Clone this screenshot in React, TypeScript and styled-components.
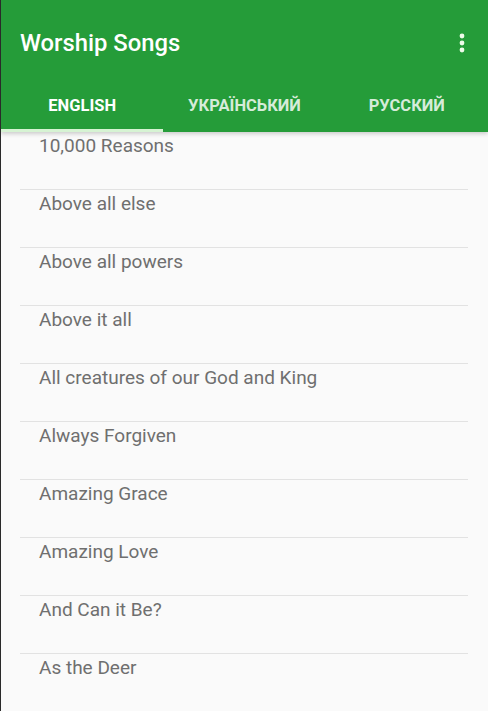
import React from "react";
import styled, { createGlobalStyle } from "styled-components";

const Global = createGlobalStyle`
  html, body { margin: 0; padding: 0; background: #fafafa; }
  body { font-family: Roboto, "Noto Sans", "Liberation Sans", sans-serif; }
  #root { width: 488px; height: 711px; overflow: hidden; }
`;

const Screen = styled.div`
  position: relative;
  width: 488px;
  height: 711px;
  background: #fafafa;
  border-left: 1px solid #2a2a2a;
  box-sizing: border-box;
  overflow: hidden;
  display: flex;
  flex-direction: column;
`;

const StatusPatch = styled.div`
  position: absolute;
  top: 0;
  right: 0;
  width: 44px;
  height: 14px;
  background: #1c6b2b;
`;

const AppBar = styled.header`
  background: #259c39;
  box-shadow: 0 2px 4px rgba(0, 0, 0, 0.18);
  display: flex;
  flex-direction: column;
  z-index: 1;
`;

const Toolbar = styled.div`
  height: 86px;
  display: flex;
  align-items: center;
  justify-content: space-between;
  padding: 0 0 0 19px;
`;

const Title = styled.h1`
  margin: 0;
  font-size: 23.8px;
  font-weight: 500;
  color: #ffffff;
`;

const MenuButton = styled.div`
  width: 52px;
  height: 52px;
  display: flex;
  align-items: center;
  justify-content: center;
`;

const Tabs = styled.nav`
  display: grid;
  grid-template-columns: 1fr 1fr 1fr;
  height: 46px;
`;

const Tab = styled.div<{ $active?: boolean }>`
  position: relative;
  display: flex;
  align-items: center;
  justify-content: center;
  padding-bottom: 8px;
  font-size: 16.5px;
  font-weight: 700;
  color: ${(p) => (p.$active ? "#ffffff" : "rgba(255,255,255,0.82)")};
  &::after {
    content: "";
    position: absolute;
    left: 0;
    right: 0;
    bottom: 0;
    height: 3px;
    background: ${(p) => (p.$active ? "#d6f3d3" : "transparent")};
  }
`;

const List = styled.ul`
  list-style: none;
  margin: 0;
  padding: 0;
`;

const Row = styled.li`
  height: 58px;
  box-sizing: border-box;
  margin: 0 20px 0 19px;
  padding: 2px 0 0 19px;
  border-bottom: 1px solid #e2e2e2;
  font-size: 19px;
  line-height: 24px;
  color: #6f6f6f;
`;

const songs = [
  "10,000 Reasons",
  "Above all else",
  "Above all powers",
  "Above it all",
  "All creatures of our God and King",
  "Always Forgiven",
  "Amazing Grace",
  "Amazing Love",
  "And Can it Be?",
  "As the Deer",
];

export default function App() {
  return (
    <>
      <Global />
      <Screen>
        <StatusPatch />
        <AppBar>
          <Toolbar>
            <Title>Worship Songs</Title>
            <MenuButton>
              <svg width="6" height="20" viewBox="0 0 6 20">
                <circle cx="3" cy="3" r="2.4" fill="#eefbe9" />
                <circle cx="3" cy="10" r="2.4" fill="#eefbe9" />
                <circle cx="3" cy="17" r="2.4" fill="#eefbe9" />
              </svg>
            </MenuButton>
          </Toolbar>
          <Tabs>
            <Tab $active>ENGLISH</Tab>
            <Tab>УКРАЇНСЬКИЙ</Tab>
            <Tab>РУССКИЙ</Tab>
          </Tabs>
        </AppBar>
        <List>
          {songs.map((s) => (
            <Row key={s}>{s}</Row>
          ))}
        </List>
      </Screen>
    </>
  );
}
